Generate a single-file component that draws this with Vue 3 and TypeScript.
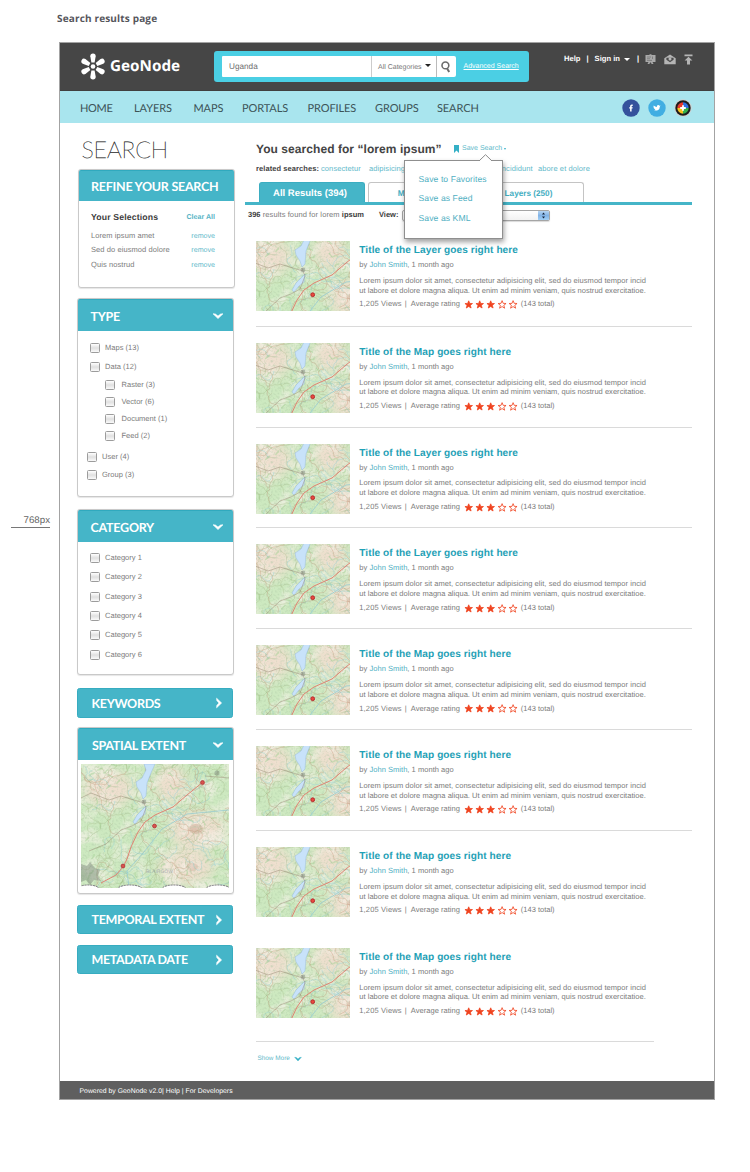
<script setup lang="ts">
import { ref } from 'vue'

interface Option {
  label: string
  kind: 'top' | 'sub' | 'outer'
  gap?: boolean
}

const navItems = ['HOME', 'LAYERS', 'MAPS', 'PORTALS', 'PROFILES', 'GROUPS', 'SEARCH']
const selections = ['Lorem ipsum amet', 'Sed do eiusmod dolore', 'Quis nostrud']
const typeOptions: Option[] = [
  { label: 'Maps (13)', kind: 'top' },
  { label: 'Data (12)', kind: 'top' },
  { label: 'Raster (3)', kind: 'sub' },
  { label: 'Vector (6)', kind: 'sub' },
  { label: 'Document (1)', kind: 'sub' },
  { label: 'Feed (2)', kind: 'sub' },
  { label: 'User (4)', kind: 'outer', gap: true },
  { label: 'Group (3)', kind: 'outer' },
]
const categories = [1, 2, 3, 4, 5, 6].map((n) => `Category ${n}`)
const results = ['Layer', 'Map', 'Layer', 'Layer', 'Map', 'Map', 'Map', 'Map']
const query = ref('Uganda')

/* Small seeded generator, so the minor roads and streams are stable. */
let seed = 41
function rnd(): number {
  seed = (seed * 16807) % 2147483647
  return seed / 2147483647
}
function wander(steps: number, stride: number): string {
  let x = rnd() * 148
  let y = rnd() * 124
  let a = rnd() * Math.PI * 2
  let d = `M${x.toFixed(1)} ${y.toFixed(1)}`
  for (let i = 0; i < steps; i++) {
    a += (rnd() - 0.5) * 1.9
    x += Math.cos(a) * stride
    y += Math.sin(a) * stride
    d += `L${x.toFixed(1)} ${y.toFixed(1)}`
  }
  return d
}
function bundle(count: number, steps: number, stride: number): string {
  return Array.from({ length: count }, () => wander(steps, stride)).join('')
}
const lanes = bundle(90, 14, 2.6)
const roads = bundle(26, 15, 3.4)
const streams = bundle(40, 13, 2.6)
const woods = bundle(70, 3, 2)
</script>

<template>
  <div class="stage">
    <svg class="defs" width="0" height="0" aria-hidden="true">
      <defs>
        <filter id="relief" x="0" y="0" width="100%" height="100%">
          <feTurbulence type="fractalNoise" baseFrequency="0.06" numOctaves="4" seed="8" />
          <feColorMatrix values="0 0 0 0 0.93  0 0 0 0 0.89  0 0 0 0 0.82  3.4 0 0 0 -1.5" />
        </filter>
        <filter id="grain" x="0" y="0" width="100%" height="100%">
          <feTurbulence type="fractalNoise" baseFrequency="0.45" numOctaves="2" seed="3" />
          <feColorMatrix values="0 0 0 0 0.40  0 0 0 0 0.56  0 0 0 0 0.36  0 2.4 0 0 -1.1" />
        </filter>
        <filter id="soft" x="-30%" y="-30%" width="160%" height="160%">
          <feGaussianBlur stdDeviation="6" />
        </filter>
        <symbol id="terrain" viewBox="0 0 148 124">
          <rect width="148" height="124" fill="#cde9c0" />
          <g filter="url(#soft)" fill="#efdfcf">
            <ellipse cx="27" cy="25" rx="25" ry="18" />
            <ellipse cx="90" cy="20" rx="16" ry="18" />
            <ellipse cx="116" cy="66" rx="28" ry="19" />
            <ellipse cx="105" cy="103" rx="28" ry="17" />
          </g>
          <rect width="148" height="124" filter="url(#relief)" opacity="0.65" />
          <ellipse cx="115" cy="65" rx="7" ry="5" fill="#b5806a" opacity="0.3" />
          <ellipse cx="111" cy="103" rx="6" ry="4" fill="#b5806a" opacity="0.22" />
          <path :d="woods" fill="none" stroke="#a4d294" stroke-width="1.4" opacity="0.5" />
          <path :d="streams" fill="none" stroke="#8fd0d8" stroke-width="0.5" opacity="0.8" />
          <path :d="lanes" fill="none" stroke="#8fa56c" stroke-width="0.4" opacity="0.6" />
          <path :d="roads" fill="none" stroke="#bf8d70" stroke-width="0.5" opacity="0.65" />
          <rect width="148" height="124" filter="url(#grain)" opacity="0.45" />
          <path d="M63 0L74 0L70 9L66 19L65 32L62 35L60 29L56 23L55 18L61 14L65 6Z" fill="#c8e2fa" stroke="#8db3d8" stroke-width="0.4" />
          <path d="M65 42L64 50L59 54L54 60L52 58L56 51Z" fill="#c8e2fa" stroke="#8db3d8" stroke-width="0.4" />
          <path d="M148 14L124 12M62 36L65 44L60 57L51 62L40 66L25 80L8 87M63 39L40 32L28 36L10 29L0 34" fill="none" stroke="#9a8b76" stroke-width="0.5" />
          <path d="M48 124L46 107L63 88L81 65L106 50L148 46" fill="none" stroke="#98ccd0" stroke-width="0.8" />
          <path d="M122 18L106 31L92 43L74 51L64 58L57 68L50 83L46 95L42 103L35 111L20 119" fill="none" stroke="#e08474" stroke-width="1" />
          <g fill="#6f7770" opacity="0.4">
            <circle cx="63" cy="38" r="2.4" />
            <circle cx="136" cy="9" r="2.6" />
            <path d="M0 100L6 102L9 98L14 104L19 106L17 112L20 117L13 116L9 121L5 116L0 118Z" />
          </g>
        </symbol>
        <symbol id="chev-down" viewBox="0 0 12 8">
          <path d="M1 1.8L3.4 2L6 4.1L8.6 2L11 1.8L6 6.6Z" fill="currentColor" stroke="currentColor" stroke-width=".6" />
        </symbol>
        <symbol id="chev-right" viewBox="0 0 8 12">
          <path d="M1.6 1.2L6.6 6L1.6 10.8L1.8 8.4L4 6L1.8 3.6Z" fill="currentColor" stroke="currentColor" stroke-width=".6" />
        </symbol>
        <symbol id="star" viewBox="0 0 10 10">
          <path d="M5 .7L6.2 3.7L9.4 3.9L6.9 5.9L7.8 9.1L5 7.3L2.2 9.1L3.1 5.9L.6 3.9L3.8 3.7Z" stroke="#f0431f" stroke-width=".9" />
        </symbol>
      </defs>
    </svg>

    <p class="caption">Search results page</p>

    <div class="canvas">
      <aside class="ruler"><span>768px</span></aside>

      <div class="frame">
        <header class="topbar">
          <div class="brand">
            <svg width="26" height="27" viewBox="-13 -13.5 26 27">
              <g fill="#fff">
                <path v-for="a in [0, 60, 120, 180, 240, 300]" :key="a" :transform="`rotate(${a})`" d="M-1.6 -4L-2.7 -10.3A2.7 2.7 0 0 1 2.7 -10.3L1.6 -4Z" />
                <circle r="2.3" />
              </g>
            </svg>
            <span>GeoNode</span>
          </div>
          <div class="searchbox">
            <input v-model="query" class="query" type="text" aria-label="Search" />
            <div class="cats">All Categories<i class="tri"></i></div>
            <button class="go" type="button" aria-label="Go">
              <svg width="10" height="12" viewBox="0 0 10 12" fill="none" stroke="#6c6c6c">
                <circle cx="4.4" cy="4.4" r="3.4" stroke-width="1.6" />
                <path d="M6 7.2L8.2 11" stroke-width="2" />
              </svg>
            </button>
            <a class="advanced">Advanced Search</a>
          </div>
          <div class="account">
            <b>Help</b><b class="bar">|</b><b>Sign in</b><i class="tri light"></i><b class="bar2">|</b>
            <svg class="ic1" width="11" height="11" viewBox="0 0 11 11">
              <path d="M.5 1H4.5V.3H6.5V1H10.5V8H7.5L8.5 10H6.5L6 8.5H5L4.5 10H2.5L3.5 8H.5Z" fill="#a9a9a9" />
              <path d="M2 3H6M2 4.7H5M2 6.4H7M7.5 2.5V5" stroke="#777" stroke-width=".8" />
            </svg>
            <svg class="ic2" width="12" height="11" viewBox="0 0 12 11">
              <path d="M.3 4.2L6 .4L11.7 4.2V10.3H.3Z" fill="#b5b5b5" />
              <path d="M2.4 3.8H9.6V5.7L6 8.2L2.4 5.7Z" fill="#4a4a4a" />
              <circle cx="6" cy="5" r="1.5" fill="#b5b5b5" />
            </svg>
            <svg class="ic3" width="9" height="11" viewBox="0 0 9 11">
              <path d="M.5 .5H8.5V2.2H.5ZM4.5 2.8L8.4 6.4H6V10.4H3V6.4H.6Z" fill="#b5b5b5" />
            </svg>
          </div>
        </header>

        <nav class="nav">
          <a v-for="item in navItems" :key="item" :class="item.toLowerCase()">{{ item }}</a>
          <div class="social">
            <svg width="18" height="18" viewBox="0 0 18 18">
              <circle cx="9" cy="9" r="8.7" fill="#35529c" />
              <path d="M8.1 12.6V9.5H7.2V8.2H8.1V7.3Q8.1 5.6 9.8 5.6H10.7V7H10.1Q9.6 7 9.6 7.5V8.2H10.7L10.5 9.5H9.6V12.6Z" fill="#fff" />
            </svg>
            <svg width="18" height="18" viewBox="0 0 18 18">
              <circle cx="9" cy="9" r="8.7" fill="#41aee2" />
              <path d="M5.7 6.6Q7 7.9 8.8 7.9Q8.7 6.1 10.2 6.1Q11.1 6.1 11.4 6.7L12.5 6.4L11.9 7.4Q11.8 9.7 10.2 10.9Q8 12.1 5.6 11.1Q6.8 11 7.4 10.5Q6.4 10.2 6.2 9.5Q5.5 9 5.7 8.4Q5.3 7.5 5.7 6.6Z" fill="#fff" />
            </svg>
            <svg width="18" height="18" viewBox="0 0 18 18">
              <circle cx="9" cy="9" r="8.7" fill="#cfd3d3" />
              <circle cx="9" cy="9" r="7.7" fill="#1d1d1d" />
              <path d="M9 9V3.3A5.7 5.7 0 0 0 3.3 9Z" fill="#e8392c" />
              <path d="M9 9H14.7A5.7 5.7 0 0 0 9 3.3Z" fill="#2f70e0" />
              <path d="M9 9V14.7A5.7 5.7 0 0 0 14.7 9Z" fill="#36b04b" />
              <path d="M9 9H3.3A5.7 5.7 0 0 0 9 14.7Z" fill="#f7c21d" />
              <path d="M9 6.2V11.8M6.2 9H11.8" stroke="#fff" stroke-width="1.8" />
            </svg>
          </div>
        </nav>

        <div class="body">
          <aside class="side">
            <h1>SEARCH</h1>

            <section class="panel refine">
              <h2>REFINE YOUR SEARCH</h2>
              <div class="sel head"><b>Your Selections</b><b class="clear">Clear All</b></div>
              <div v-for="s in selections" :key="s" class="sel"><span>{{ s }}</span><a>remove</a></div>
            </section>

            <section class="panel type">
              <h2>TYPE<svg class="cd" width="12" height="8"><use href="#chev-down" /></svg></h2>
              <div class="opts">
                <label v-for="o in typeOptions" :key="o.label" :class="[o.kind, { gap: o.gap }]"><i class="box"></i>{{ o.label }}</label>
              </div>
            </section>

            <section class="panel category">
              <h2>CATEGORY<svg class="cd" width="12" height="8"><use href="#chev-down" /></svg></h2>
              <div class="opts">
                <label v-for="c in categories" :key="c" class="cat"><i class="box"></i>{{ c }}</label>
              </div>
            </section>

            <h2 class="closed k">KEYWORDS<svg class="cr" width="8" height="12"><use href="#chev-right" /></svg></h2>

            <section class="panel spatial">
              <h2>SPATIAL EXTENT<svg class="cd" width="12" height="8"><use href="#chev-down" /></svg></h2>
              <svg class="bigmap" width="148" height="124" viewBox="0 0 148 124">
                <use href="#terrain" width="148" height="124" />
                <g fill="#fff" stroke="#77727c" stroke-width="1" stroke-dasharray="2 .8">
                  <ellipse cx="7" cy="125" rx="11" ry="4" />
                  <ellipse cx="49" cy="125" rx="12" ry="4" />
                  <ellipse cx="93" cy="125" rx="12" ry="4" />
                  <ellipse cx="137" cy="125" rx="12" ry="4" />
                </g>
                <text x="65" y="109" class="place">BLAIRGOW</text>
                <g fill="#d9534c" stroke="#b23a40" stroke-width=".9">
                  <circle cx="121.5" cy="18.5" r="1.9" />
                  <circle cx="73.5" cy="62" r="1.9" />
                  <circle cx="42" cy="102" r="1.9" />
                </g>
              </svg>
            </section>

            <h2 class="closed t">TEMPORAL EXTENT<svg class="cr" width="8" height="12"><use href="#chev-right" /></svg></h2>
            <h2 class="closed m">METADATA DATE<svg class="cr" width="8" height="12"><use href="#chev-right" /></svg></h2>
          </aside>

          <main class="main">
            <div class="heading">
              <h3>You searched for “lorem ipsum”</h3>
              <div class="save">
                <svg width="5" height="8" viewBox="0 0 5 8"><path d="M0 0H5V8L2.5 5.6L0 8Z" fill="#35b0c6" /></svg>
                <a>Save Search</a><i class="tri tiny"></i>
                <div class="menu">
                  <svg class="beak" width="13" height="7" viewBox="0 0 13 7"><path d="M0 7L6.5 .7L13 7" fill="#fff" stroke="#8a8a8a" stroke-width="1" /></svg>
                  <a>Save to Favorites</a>
                  <a>Save as Feed</a>
                  <a>Save as KML</a>
                </div>
              </div>
            </div>
            <div class="related">
              <b>related searches:</b><a>consectetur</a><a>adipisicing</a><a class="inc">incididunt</a><a>abore et dolore</a>
            </div>
            <div class="tabs">
              <div class="tab on">All Results (394)</div>
              <div class="tab">Maps (144)</div>
              <div class="tab">Layers (250)</div>
            </div>
            <div class="tools">
              <span><b>396</b> results found for lorem <b>ipsum</b></span>
              <b class="view">View:</b>
              <div class="select"><svg width="11" height="11" viewBox="0 0 11 11"><path d="M5.5 2.6L7 4.6H4ZM5.5 8.4L7 6.4H4Z" fill="#16233a" /></svg></div>
            </div>

            <div class="list">
              <article v-for="(kind, i) in results" :key="i" :class="{ plain: i > 5 }">
                <svg class="thumb" width="94" height="70" viewBox="16 9 94 70">
                  <use href="#terrain" width="148" height="124" />
                  <circle cx="72.7" cy="62.7" r="1.9" fill="#e84a3e" stroke="#b3222a" stroke-width=".9" />
                </svg>
                <div class="info">
                  <h4>Title of the {{ kind }} goes right here</h4>
                  <p class="by">by <a>John Smith</a>, 1 month ago</p>
                  <p class="l1">Lorem ipsum dolor sit amet, consectetur adipisicing elit, sed do eiusmod tempor incid</p>
                  <p class="l2">ut labore et dolore magna aliqua. Ut enim ad minim veniam, quis nostrud exercitatioe.</p>
                  <div class="stats">
                    <span class="views">1,205 Views</span><span class="pipe">|</span><span class="avg">Average rating</span>
                    <span class="stars">
                      <svg v-for="n in 5" :key="n" width="11" height="9" viewBox="0 0 11 9"><use href="#star" x="0.4" :width="n < 4 ? 8.6 : 9.4" height="9" :fill="n < 4 ? '#f0431f' : '#fff'" /></svg>
                    </span>
                    <span class="total">(143 total)</span>
                  </div>
                </div>
              </article>
            </div>
            <div class="more">Show More<svg width="8" height="6" viewBox="0 0 12 8" preserveAspectRatio="none"><use href="#chev-down" /></svg></div>
          </main>
        </div>

        <footer>Powered by GeoNode v2.0| Help | For Developers</footer>
      </div>
    </div>
  </div>
</template>

<style>
html, body { background: #fff; }
</style>

<style scoped>
.stage { width: 750px; height: 1172px; overflow: hidden; background: #fff; font-family: "Liberation Sans", Arial, sans-serif; font-size: 7.5px; line-height: 10px; color: #7b7b7b; white-space: nowrap; text-rendering: geometricPrecision; }
.stage * { box-sizing: border-box; }
.defs { position: absolute; }
h1, h2, h3, h4, p { margin: 0; }
svg { display: block; flex: none; }
a { color: #62b9ca; text-decoration: none; }
i.tri { display: inline-block; border: 3px solid transparent; border-top: 3.5px solid #222; border-bottom: 0; }
.caption { height: 42px; padding: 10px 0 0 57px; font: bold 10px/16px "Open Sans", sans-serif; letter-spacing: .16px; color: #56565c; }
.canvas { display: flex; }
.ruler { width: 59px; padding: 472px 0 0 11px; }
.ruler span { display: block; width: 39px; height: 13.5px; text-align: right; border-bottom: 1px solid #777; font-size: 9.7px; line-height: 13px; color: #666; }
.frame { width: 655.5px; height: 1058px; border: 1px solid #a3a3a3; border-right-width: 1.5px; display: flex; flex-direction: column; }

.topbar { height: 48px; flex: none; background: #464646; display: flex; align-items: flex-start; border-bottom: 1px solid #404040; }
.brand { display: flex; width: 154px; padding: 9px 0 0 20px; align-items: center; color: #fff; font: bold 15.2px/28px "Noto Sans", sans-serif; }
.brand span { padding-left: 4px; }
.searchbox { margin-top: 8px; width: 315px; height: 31px; background: #4bcfe4; border-radius: 3px; display: flex; align-items: center; padding: 0 8px; }
.query { width: 150px; height: 20.5px; border: 0; border-right: 1px solid #ccc; border-radius: 1px 0 0 1px; padding: 0 7px; font: 8.2px "Liberation Sans", Arial, sans-serif; color: #6e6e6e; background: #fff; outline: 0; text-rendering: geometricPrecision; }
.cats { width: 65px; height: 20.5px; background: #fff; display: flex; padding: 6.8px 0 0 6px; font-size: 7px; color: #777; border-right: 1px solid #bbb; }
.cats .tri { margin: 1px 0 0 3px; }
.go { width: 18.5px; height: 20.5px; border: 0; padding: 0 0 0 4px; background: #fff; border-radius: 0 2px 2px 0; }
.advanced { margin-left: 8px; padding-top: 1px; font-size: 7px; color: #fff; text-decoration: underline; }
.account { margin-left: 35px; margin-top: 10.5px; display: flex; align-items: center; color: #fff; font-size: 7.6px; }
.account b { padding-top: .6px; }
.bar { margin: 0 6px; }
.tri.light { border-top-color: #fff; border-width: 3px 3px 0; margin: 1px 0 0 4.5px; }
.bar2 { margin: 0 6px 0 6.5px; }
.ic2 { margin-left: 8px; }
.ic3 { margin-left: 8px; }

.nav { height: 32px; flex: none; background: #a9e5ee; display: flex; align-items: center; padding: 3.5px 22px 0 20px; font: 11px/16px Lato, sans-serif; }
.nav a { color: #3c5357; letter-spacing: -.1px; width: 59.5px; }
.nav .home { width: 54px; letter-spacing: -.3px; }
.nav .maps { width: 48.5px; }
.nav .portals { width: 65.5px; }
.nav .profiles { width: 67.5px; }
.nav .groups { width: 62px; }
.nav .search { width: 60px; }
.social { margin-left: auto; margin-top: -1px; display: flex; gap: 8px; }

.body { height: 958px; flex: none; display: flex; }
.side { width: 174px; padding-left: 17px; }
h1 { height: 45.5px; padding: 13px 0 0 4.5px; font: 100 23.2px/27px Lato, sans-serif; letter-spacing: -.15px; color: #333; -webkit-text-stroke: .35px #333; }
h2 { font: bold 12.5px/17px Lato, sans-serif; letter-spacing: -.25px; color: #fff; background: #45b5c8; display: flex; align-items: center; height: 31.5px; padding: 1.5px 9px 0 12.5px; border-radius: 2px 2px 0 0; border-top: 1px solid #30a9be; }
h2 svg { margin-left: auto; }
.panel { border: 1px solid #c9c9c9; border-radius: 3px; background: #fff; width: 157px; box-shadow: 0 .5px 1px rgba(0, 0, 0, .1); }
.refine { height: 119.5px; margin-left: 1px; }
.refine h2 { padding-left: 12px; }
.refine .sel { display: flex; justify-content: space-between; padding: 0 19px 0 12px; height: 14.6px; line-height: 14.6px; letter-spacing: .08px; }
.refine .sel.head { height: 19px; margin-top: 6.5px; margin-bottom: 2.3px; line-height: 19px; }
.head b { font-size: 8.7px; letter-spacing: .14px; color: #3c3c3c; }
.head b.clear { font-size: 7px; letter-spacing: .05px; color: #55b4c6; }
.refine .sel a { letter-spacing: 0; font-size: 7.1px; }
.type { margin-top: 10px; height: 198.5px; }
.category { margin-top: 12.5px; height: 166px; }
.opts { padding: 7.5px 0 0 12px; }
.opts label { display: flex; align-items: center; height: 19px; letter-spacing: .02px; }
.opts .sub { height: 17px; padding-left: 14.5px; }
.opts .outer { height: 18.5px; margin-left: -3px; }
.opts .gap { margin-top: 3.5px; }
.opts .cat { height: 19.4px; }
.category .opts { padding-top: 6.6px; }
.box { width: 10px; height: 10px; flex: none; margin-right: 5px; border: 1px solid #9c9c9c; border-radius: 1.5px; background: linear-gradient(#fff, #e0e0e0 50%, #fafafa); }
.sub .box { margin-right: 7px; }
.closed { height: 29.5px; width: 156px; padding-left: 13.5px; padding-top: .5px; border-radius: 2.5px; border: 1px solid #37acc0; }
.closed.k { letter-spacing: -.3px; margin-top: 13px; }
.spatial { margin-top: 9.5px; height: 167px; width: 156.5px; }
.spatial h2 { padding-left: 14px; letter-spacing: -.3px; }
.bigmap { margin: 4px 0 0 3px; }
.place { font: 5px "Liberation Sans", Arial, sans-serif; fill: #8a93a0; fill-opacity: .7; }
.closed.t { margin-top: 10.5px; letter-spacing: -.33px; }
.closed.m { margin-top: 10.5px; letter-spacing: -.36px; }

.main { margin-left: 11px; width: 447px; display: flex; flex-direction: column; }
.heading { display: flex; height: 34px; padding: 17px 0 0 11px; line-height: 17px; }
h3 { font-size: 12px; letter-spacing: .06px; color: #444; width: 198px; padding-top: .5px; }
.save { position: relative; display: flex; align-items: center; height: 17px; font-size: 7px; }
.save > a { margin-left: 3px; }
.tri.tiny { border-width: 2px 1.6px 0; border-top-color: #35b0c6; margin-left: 1.5px; }
.menu { position: absolute; left: -50.5px; top: 19.5px; width: 99px; height: 79px; background: #fff; border: 1px solid #8f8f8f; box-shadow: 1px 3px 5px rgba(0, 0, 0, .38); padding: 9px 0 0 14px; z-index: 2; }
.menu > a { display: block; font-size: 8.6px; line-height: 19.8px; letter-spacing: .08px; color: #50afc2; }
.beak { position: absolute; left: 74.5px; top: -7px; }
.related { margin: 6.5px 0 0 11px; height: 10px; display: flex; color: #444; letter-spacing: .1px; }
.related b { letter-spacing: .08px; width: 65px; }
.related a { width: 48px; }
.related .inc { margin-left: 83px; width: 38px; }
.tabs { margin-top: 8px; height: 23.5px; padding-left: 14px; border-bottom: 3.5px solid #45b5c8; display: flex; gap: 2.5px; flex: none; }
.tab { width: 107px; height: 20px; border: 1px solid #c4c4c4; border-bottom: 0; border-radius: 3px 3px 0 0; text-align: center; font-size: 8.2px; font-weight: bold; line-height: 22px; color: #45aec2; padding-right: 4px; }
.tab.on { width: 106px; background: #45b5c8; border-color: #3badc1; color: #fff; font-size: 9.5px; }
.tools { height: 20px; flex: none; display: flex; align-items: center; padding-left: 3px; letter-spacing: .1px; padding-top: .5px; }
.tools b { color: #3c3c3c; letter-spacing: 0; }
.tools span { width: 131px; }
.view { width: 23px; }
.select { width: 148px; height: 11px; border: 1px solid #a5a5a5; border-radius: 2px; background: linear-gradient(#fff, #f2f2f2); display: flex; justify-content: flex-end; align-items: center; overflow: hidden; box-shadow: 0 1px 1px rgba(0, 0, 0, .15); }
.select svg { background: linear-gradient(#c2dcf5, #82b3e6 50%, #a8d6fa); }

.list { padding: 0 0 0 11px; }
article { height: 100.85px; display: flex; border-bottom: 1px solid #dadada; padding-top: 16px; width: 436px; }
article:first-child { height: 101.8px; }
article.plain { border-color: transparent; }
.thumb { margin-right: 9.3px; }
.info { padding-top: 3px; }
h4 { font-size: 10.1px; line-height: 14px; height: 16px; letter-spacing: .07px; color: #1fa1b6; }
.by { height: 15.8px; letter-spacing: .04px; }
.by a { color: #4fb0c4; }
.l1 { height: 9.8px; letter-spacing: .052px; }
.l2 { height: 13.7px; letter-spacing: .03px; }
.stats { display: flex; height: 10px; align-items: center; }
.views { width: 45.5px; letter-spacing: .15px; }
.pipe { width: 6px; }
.avg { width: 53px; letter-spacing: .04px; }
.stars { display: flex; width: 57px; padding-top: .5px; }
.more { display: flex; align-items: center; width: 398px; margin: 8.6px 0 0 11px; height: 33px; border-top: 1px solid #dadada; padding-left: 1.5px; padding-top: 1px; font-size: 6.4px; color: #62b9ca; }
.more svg { margin-left: 4px; color: #35b0c6; }

footer { height: 18px; flex: none; background: #5f5f5f; color: #fff; padding: 1.8px 0 0 19.5px; line-height: 17px; font-size: 6.8px; letter-spacing: .04px; }
</style>
